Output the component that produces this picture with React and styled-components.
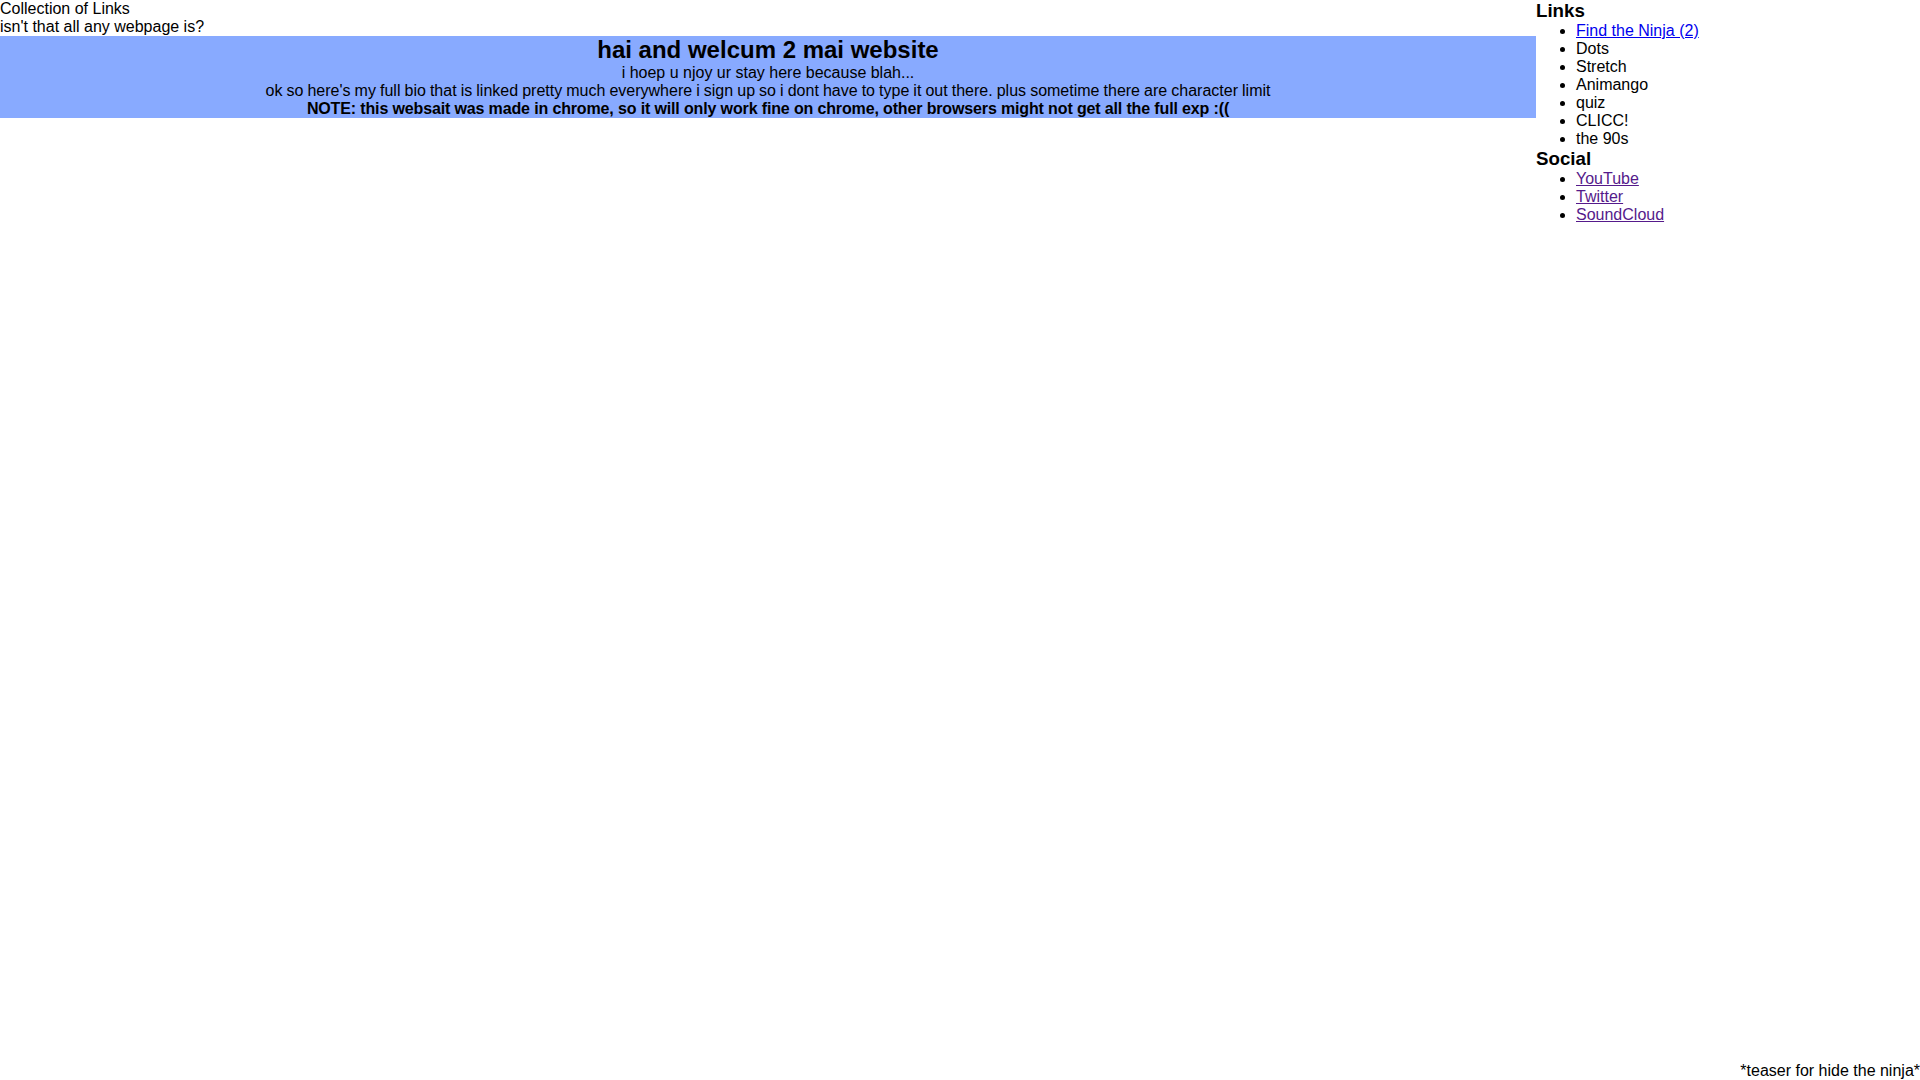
import React from 'react';
import styled, { createGlobalStyle } from 'styled-components';

const GlobalStyle = createGlobalStyle`
  html, body {
    margin: 0;
    padding: 0;
    background: #ffffff;
  }
  body {
    font-family: "Liberation Sans", Arial, sans-serif;
    font-size: 16px;
    color: #000000;
  }
`;

const links = [
  { label: 'Find the Ninja (2)', href: '#ninja', kind: 'link' },
  { label: 'Dots' },
  { label: 'Stretch' },
  { label: 'Animango' },
  { label: 'quiz' },
  { label: 'CLICC!' },
  { label: 'the 90s' },
];

const social = [
  { label: 'YouTube', href: '#youtube', kind: 'visited' },
  { label: 'Twitter', href: '#twitter', kind: 'visited' },
  { label: 'SoundCloud', href: '#soundcloud', kind: 'visited' },
];

const App = () => {
  const renderItem = (item) => (
    <Item key={item.label}>
      {item.href ? (
        <Anchor href={item.href} $visited={item.kind === 'visited'}>
          {item.label}
        </Anchor>
      ) : (
        item.label
      )}
    </Item>
  );

  return (
    <Page>
      <GlobalStyle />
      <Columns>
        <Main>
          <Tagline>Collection of Links</Tagline>
          <Tagline>isn't that all any webpage is?</Tagline>
          <Banner>
            <Title>hai and welcum 2 mai website</Title>
            <Line>i hoep u njoy ur stay here because blah...</Line>
            <Bio>
              ok so here's my full bio that is linked pretty much everywhere i sign up so i dont have to type it
              out there. plus sometime there are character limit
            </Bio>
            <Note>
              NOTE: this websait was made in chrome, so it will only work fine on chrome, other browsers might not
              get all the full exp :((
            </Note>
          </Banner>
        </Main>
        <Sidebar>
          <SideTitle>Links</SideTitle>
          <List>{links.map(renderItem)}</List>
          <SideTitle>Social</SideTitle>
          <List>{social.map(renderItem)}</List>
        </Sidebar>
      </Columns>
      <Footer>*teaser for hide the ninja*</Footer>
    </Page>
  );
};
export default App;

const Page = styled.div`
  display: flex;
  flex-direction: column;
  min-height: 100vh;
  box-sizing: border-box;
`;

const Columns = styled.div`
  display: grid;
  grid-template-columns: 80% 20%;
  flex: 1;
  align-items: start;
`;

const Main = styled.div`
  display: flex;
  flex-direction: column;
`;

const Tagline = styled.div`
  font-size: 16px;
  line-height: 18px;
`;

const Banner = styled.div`
  background: #88aaff;
  text-align: center;
`;

const Title = styled.h2`
  margin: 0;
  font-size: 24px;
  font-weight: bold;
  line-height: 28px;
`;

const Line = styled.div`
  font-size: 16px;
  line-height: 18px;
`;

const Bio = styled(Line)`
  word-spacing: -0.38px;
`;

const Note = styled(Line)`
  font-weight: bold;
  letter-spacing: -0.14px;
`;

const Sidebar = styled.div`
  display: flex;
  flex-direction: column;
`;

const SideTitle = styled.h3`
  margin: 0;
  font-size: 18.72px;
  font-weight: bold;
  line-height: 22px;
`;

const List = styled.ul`
  margin: 0;
  padding-left: 40px;
  list-style: disc;
`;

const Item = styled.li`
  font-size: 16px;
  line-height: 18px;
`;

const Anchor = styled.a`
  color: ${(p) => (p.$visited ? '#551a8b' : '#0000ee')};
  text-decoration: underline;
`;

const Footer = styled.div`
  text-align: right;
  font-size: 16px;
  line-height: 18px;
`;
